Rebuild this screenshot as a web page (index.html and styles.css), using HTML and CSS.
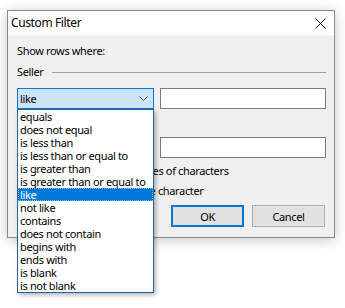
FILE: index.html
```html
<!DOCTYPE html>
<html lang="en">
<head>
    <meta charset="UTF-8">
    <meta name="viewport" content="width=device-width, initial-scale=1.0">
    <title>Custom Filter</title>

    <link rel="stylesheet" href="styles.css">
</head>
<body>
    <div class="dialog">
        <div class="title-bar">
            <span class="title">Custom Filter</span>
            <svg class="close" width="11" height="11" viewBox="0 0 11 11">
                <path d="M0.5 0.5 L10.5 10.5 M10.5 0.5 L0.5 10.5" stroke="#000" stroke-width="1" fill="none"/>
            </svg>
        </div>
        <div class="content">
            <div class="caption">Show rows where:</div>
            <div class="group-label">
                <span>Seller</span>
                <div class="rule"></div>
            </div>

            <div class="condition">
                <div class="combo open">
                    <span>like</span>
                    <svg class="chevron" width="9" height="5" viewBox="0 0 9 5">
                        <path d="M0.5 0.5 L4.5 4.5 L8.5 0.5" stroke="#606060" stroke-width="1" fill="none"/>
                    </svg>
                    <ul class="drop-list">
                        <li>equals</li>
                        <li>does not equal</li>
                        <li>is less than</li>
                        <li>is less than or equal to</li>
                        <li>is greater than</li>
                        <li>is greater than or equal to</li>
                        <li class="selected">like</li>
                        <li>not like</li>
                        <li>contains</li>
                        <li>does not contain</li>
                        <li>begins with</li>
                        <li>ends with</li>
                        <li>is blank</li>
                        <li>is not blank</li>
                    </ul>
                </div>
                <div class="textbox"></div>
            </div>

            <div class="condition second">
                <div class="combo"></div>
                <div class="textbox"></div>
            </div>

            <div class="hint first">Use * to represent any series of characters</div>
            <div class="hint">Use ? to represent any single character</div>

            <div class="buttons">
                <button class="btn default">OK</button>
                <button class="btn">Cancel</button>
            </div>
        </div>
    </div>
</body>
</html>
```

FILE: styles.css
```css
/* Reset */
* {
    margin: 0;
    padding: 0;
    box-sizing: border-box;
}
body {
    font-family: "Noto Sans", "Open Sans", sans-serif;
    font-size: 11px;
    letter-spacing: -0.35px;
    line-height: 16px;
    color: #000;
    background: #fff;
    padding: 10px 0 0 7px;
    min-height: 308px;
}
.dialog {
    width: 328px;
    height: 228px;
    border: 1px solid #8a8a8a;
    background: #f0f0f0;
    box-shadow: 0 2px 12px rgba(0, 0, 0, 0.22);
}
.title-bar {
    height: 24px;
    background: #fff;
    display: flex;
    align-items: center;
    justify-content: space-between;
    padding: 0 8px 0 3px;
}
.title {
    font-size: 12px;
    letter-spacing: -0.38px;
}
.close {
    display: block;
    margin-top: 1px;
}
.content {
    padding: 8px 8px 0 9px;
}
.caption {
    margin-bottom: 5px;
}
.group-label {
    display: flex;
    align-items: center;
    gap: 8px;
    margin-bottom: 8px;
}
.rule {
    flex: 1;
    height: 1px;
    background: #a0a0a0;
    margin-top: 1px;
}
.condition {
    display: flex;
    gap: 6px;
    height: 21px;
}
.condition.second {
    margin-top: 28px;
}
.combo {
    position: relative;
    width: 137px;
    height: 21px;
    border: 1px solid #7a7a7a;
    background: #e1e1e1;
    display: flex;
    align-items: center;
    justify-content: space-between;
    padding: 0 5px 0 2px;
}
.combo.open {
    border-color: #0078d7;
    background: #cce4f7;
}
.chevron {
    display: block;
}
.textbox {
    flex: 1;
    height: 21px;
    border: 1px solid #7a7a7a;
    background: #fff;
}
.drop-list {
    position: absolute;
    top: 20px;
    left: -1px;
    width: 137px;
    list-style: none;
    background: #fff;
    border: 1px solid #2a6495;
    box-shadow: 2px 2px 4px rgba(0, 0, 0, 0.3);
    z-index: 10;
}
.drop-list li {
    height: 13px;
    line-height: 13px;
    padding-left: 2px;
    white-space: nowrap;
}
.drop-list li.selected {
    background: #0078d7;
    color: #fff;
    outline: 1px dotted #7fbfff;
    outline-offset: -1px;
}
.hint {
    white-space: nowrap;
    margin-top: 4px;
}
.hint.first {
    margin-top: 5px;
    padding-left: 7px;
}
.buttons {
    display: flex;
    justify-content: flex-end;
    gap: 8px;
    margin-top: 6px;
    padding-right: 1px;
}
.btn {
    font-family: inherit;
    font-size: 11px;
    letter-spacing: inherit;
    width: 73px;
    height: 22px;
    background: #e1e1e1;
    border: 1px solid #adadad;
    color: #000;
}
.btn.default {
    border: 2px solid #0078d7;
}
```
